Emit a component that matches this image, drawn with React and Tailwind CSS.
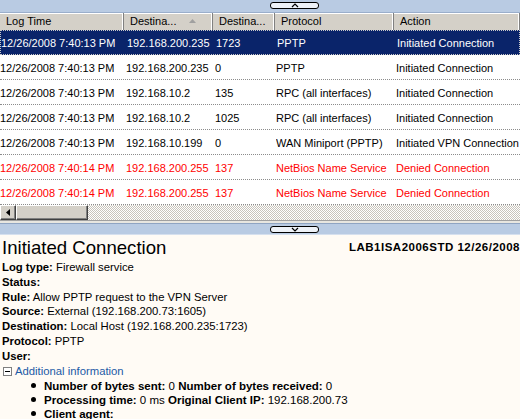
import React from "react"

const rows = [
  { time: "12/26/2008 7:40:13 PM", dest: "192.168.200.235", port: "1723", proto: "PPTP", action: "Initiated Connection", selected: true },
  { time: "12/26/2008 7:40:13 PM", dest: "192.168.200.235", port: "0", proto: "PPTP", action: "Initiated Connection" },
  { time: "12/26/2008 7:40:13 PM", dest: "192.168.10.2", port: "135", proto: "RPC (all interfaces)", action: "Initiated Connection" },
  { time: "12/26/2008 7:40:13 PM", dest: "192.168.10.2", port: "1025", proto: "RPC (all interfaces)", action: "Initiated Connection" },
  { time: "12/26/2008 7:40:13 PM", dest: "192.168.10.199", port: "0", proto: "WAN Miniport (PPTP)", action: "Initiated VPN Connection" },
  { time: "12/26/2008 7:40:14 PM", dest: "192.168.200.255", port: "137", proto: "NetBios Name Service", action: "Denied Connection", denied: true },
  { time: "12/26/2008 7:40:14 PM", dest: "192.168.200.255", port: "137", proto: "NetBios Name Service", action: "Denied Connection", denied: true },
]

function Chevron({ down }) {
  return (
    <svg width="10" height="5" viewBox="0 0 10 5">
      <path d={down ? "M2 1 L5 4 L8 1" : "M2 4 L5 1 L8 4"} fill="none" stroke="#000" strokeWidth="1.2" />
    </svg>
  )
}

function SplitterButton({ down }) {
  return (
    <div className="ml-[270px] w-[49px] h-[7px] rounded-[3px] border border-black bg-[#eef2f8] flex items-center justify-center">
      <Chevron down={down} />
    </div>
  )
}

function HeaderCell({ w, children, sort }) {
  return (
    <div className={`${w} h-full flex items-center pl-[6px] border-r border-r-[#808080] shadow-[inset_-1px_0_0_#ffffff,inset_0_1px_0_#ffffff] whitespace-nowrap overflow-hidden relative`}>
      {children}
      {sort && (
        <svg className="absolute left-[65px] top-[6px]" width="7" height="4" viewBox="0 0 7 4">
          <path d="M0 4 L3.5 0 L7 4 Z" fill="#a0a0a0" />
        </svg>
      )}
    </div>
  )
}

export default function App() {
  return (
    <div className="w-[520px] h-[419px] overflow-hidden bg-white font-['Liberation_Sans',Arial,sans-serif] text-[11px] text-black">
      {/* top splitter */}
      <div className="h-[13px] bg-[#b9cbe3] border-b border-b-[#9aaecb] pt-[2px]">
        <SplitterButton />
      </div>

      {/* header */}
      <div className="h-[17px] flex bg-[#d4d0c8] text-[#000]">
        <HeaderCell w="w-[124px]">Log Time</HeaderCell>
        <HeaderCell w="w-[89px]" sort>Destina...</HeaderCell>
        <HeaderCell w="w-[62px]">Destina...</HeaderCell>
        <HeaderCell w="w-[119px]">Protocol</HeaderCell>
        <HeaderCell w="flex-1">Action</HeaderCell>
      </div>

      {/* rows */}
      <div>
        {rows.map((r, i) => (
          <div
            key={i}
            className={`h-[25px] pt-[2px] flex items-center whitespace-nowrap ${
              r.selected
                ? "bg-[#0a246a] text-white border border-dotted border-[#c8c8c8]"
                : "border-b border-dotted border-b-[#8c8c8c]"
            } ${r.denied ? "text-[#ff0000]" : ""}`}
          >
            <div className="w-[126px] overflow-hidden">{r.time}</div>
            <div className="w-[89px] overflow-hidden">{r.dest}</div>
            <div className="w-[61px] overflow-hidden">{r.port}</div>
            <div className="w-[120px] overflow-hidden">{r.proto}</div>
            <div className="flex-1 overflow-hidden">{r.action}</div>
          </div>
        ))}
      </div>

      {/* horizontal scrollbar */}
      <div className="h-[15px] flex bg-[repeating-conic-gradient(#c8c4bc_0_25%,#ffffff_0_50%)] bg-[length:2px_2px]">
        <div className="w-[16px] h-full bg-[#d4d0c8] border border-t-white border-l-white border-r-[#404040] border-b-[#404040] shadow-[inset_-1px_-1px_0_#808080] flex items-center justify-center">
          <svg width="4" height="7" viewBox="0 0 4 7">
            <path d="M4 0 L0 3.5 L4 7 Z" fill="#000" />
          </svg>
        </div>
        <div className="w-[72px] h-full bg-[#d4d0c8] border border-t-white border-l-white border-r-[#404040] border-b-[#404040] shadow-[inset_-1px_-1px_0_#808080]" />
      </div>
      <div className="h-[3px] bg-[#e8e6e0] border-t border-t-[#a0a0a0]" />

      {/* bottom splitter */}
      <div className="h-[12px] bg-[#b9cbe3] border-t border-t-[#8fa4c2] border-b border-b-[#d6e0ee] pt-[2px]">
        <SplitterButton down />
      </div>

      {/* details */}
      <div className="bg-[#fffbf5] h-[200px] pl-[2px] text-[11.3px] leading-[14.8px]">
        <div className="h-[25px] flex items-center whitespace-nowrap">
          <div className="w-[351px] text-[18.6px] leading-[24px]">Initiated Connection</div>
          <div className="font-bold text-[11.5px] tracking-[0.5px]">LAB1ISA2006STD 12/26/2008</div>
        </div>
        <div><b>Log type:</b> Firewall service</div>
        <div><b>Status:</b></div>
        <div><b>Rule:</b> Allow PPTP request to the VPN Server</div>
        <div><b>Source:</b> External (192.168.200.73:1605)</div>
        <div><b>Destination:</b> Local Host (192.168.200.235:1723)</div>
        <div><b>Protocol:</b> PPTP</div>
        <div><b>User:</b></div>
        <div className="flex items-center h-[15px]">
          <span className="w-[9px] h-[9px] border border-[#7f7f7f] bg-white flex items-center justify-center mr-[3px] ml-[1px]">
            <span className="w-[5px] h-[1px] bg-black" />
          </span>
          <span className="text-[#1c5aa6]">Additional information</span>
        </div>
        <ul className="leading-[14px] text-[11.5px]">
          <li className="flex items-center whitespace-nowrap">
            <span className="w-[5px] h-[5px] rounded-full bg-black ml-[29px] mr-[8px]" />
            <span><b>Number of bytes sent:</b> 0 <b>Number of bytes received:</b> 0</span>
          </li>
          <li className="flex items-center whitespace-nowrap">
            <span className="w-[5px] h-[5px] rounded-full bg-black ml-[29px] mr-[8px]" />
            <span><b>Processing time:</b> 0 ms <b>Original Client IP:</b> 192.168.200.73</span>
          </li>
          <li className="flex items-center whitespace-nowrap">
            <span className="w-[5px] h-[5px] rounded-full bg-black ml-[29px] mr-[8px]" />
            <span><b>Client agent:</b></span>
          </li>
        </ul>
      </div>
    </div>
  )
}
